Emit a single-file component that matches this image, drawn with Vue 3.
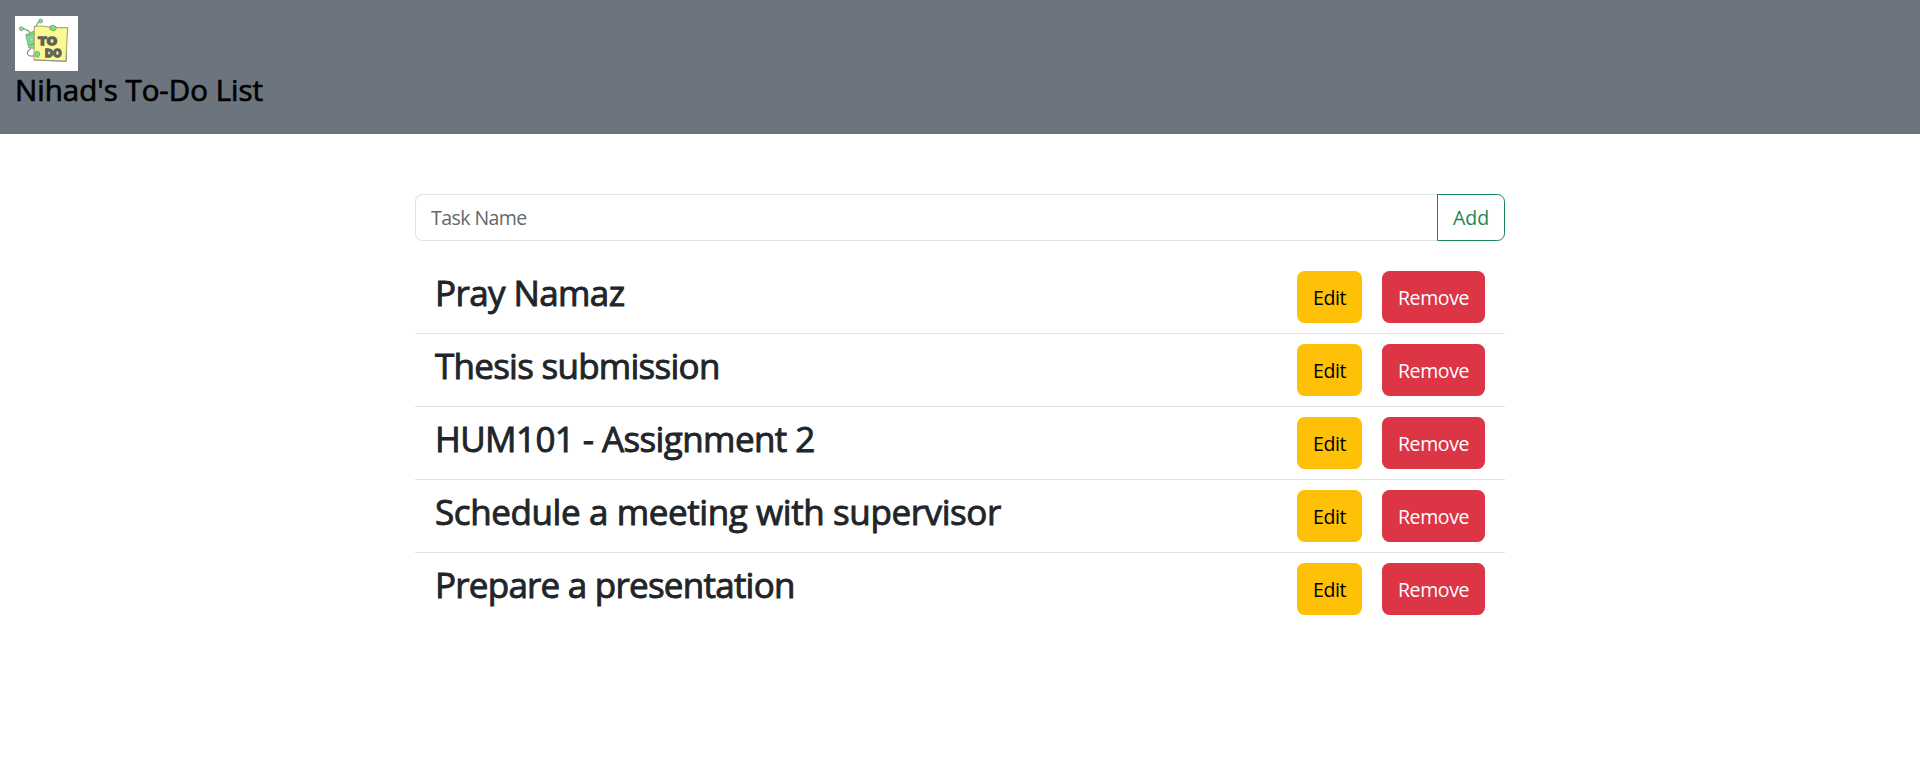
<script setup>
import { ref } from 'vue'

const draft = ref('')
const editing = ref(-1)
const tasks = ref([
  'Pray Namaz',
  'Thesis submission',
  'HUM101 - Assignment 2',
  'Schedule a meeting with supervisor',
  'Prepare a presentation',
])

function saveTask() {
  const name = draft.value.trim()
  if (!name) return
  if (editing.value >= 0) tasks.value[editing.value] = name
  else tasks.value.push(name)
  draft.value = ''
  editing.value = -1
}

function editTask(index) {
  draft.value = tasks.value[index]
  editing.value = index
}

function removeTask(index) {
  tasks.value.splice(index, 1)
  editing.value = -1
}
</script>

<template>
  <header class="banner">
    <svg class="logo" viewBox="0 0 189 165" aria-hidden="true">
      <rect width="189" height="165" fill="#fff" />
      <g fill="none" stroke="#8b8f8d" stroke-width="3.5" stroke-linecap="round">
        <path d="M20 38 Q36 39 45 49" />
        <path d="M75 17 Q67 19 64 31" />
        <path d="M47 98 Q34 106 38 115 Q43 123 61 119" />
      </g>
      <g fill="#7ee08e" stroke="#699174" stroke-width="2">
        <circle cx="19" cy="38" r="6" />
        <circle cx="77" cy="15" r="6" />
        <path d="M32 56 L57 45 L61 98 L41 95 Z" />
      </g>
      <path d="M37 60 L55 53" stroke="#5fb873" stroke-width="3" />
      <circle cx="50" cy="71" r="5" fill="#c8ebcc" stroke="#6f9c79" stroke-width="2" />
      <path d="M43 83 Q49 92 57 82" fill="none" stroke="#59915f" stroke-width="3" />
      <path d="M58 31 Q84 28 112 35 L158 35 Q155 84 153 136 L57 132 Z" fill="#fbf994" stroke="#aaa777" stroke-width="3.5" stroke-linejoin="round" />
      <path d="M59 132 Q106 133 153 136 L155 111" fill="none" stroke="#96957e" stroke-width="3" />
      <g fill="#77e27e" stroke="#67985f" stroke-width="2">
        <ellipse cx="114" cy="36" rx="10" ry="8" transform="rotate(15 114 36)" />
        <ellipse cx="67" cy="115" rx="7" ry="9" />
      </g>
      <g class="logo-text">
        <text x="70" y="88" textLength="56" lengthAdjust="spacingAndGlyphs">TO</text>
        <text x="89" y="124" textLength="51" lengthAdjust="spacingAndGlyphs">DO</text>
      </g>
    </svg>
    <h1 class="title">Nihad's To-Do List</h1>
  </header>
  <main class="content">
    <form class="entry" @submit.prevent="saveTask">
      <input v-model="draft" class="field" type="text" placeholder="Task Name" aria-label="Task Name" />
      <button class="add" type="submit">Add</button>
    </form>
    <ul class="tasks">
      <li v-for="(task, index) in tasks" :key="index" class="task">
        <h2 class="name">{{ task }}</h2>
        <button class="btn edit" type="button" @click="editTask(index)">Edit</button>
        <button class="btn remove" type="button" @click="removeTask(index)">Remove</button>
      </li>
    </ul>
  </main>
</template>

<style>
body {
  margin: 0;
  background: #fff;
}
</style>

<style scoped>
.banner,
.content,
.field,
.add,
.btn {
  font-family: "Segoe UI", "Open Sans", "Noto Sans", sans-serif;
}
.banner {
  box-sizing: border-box;
  height: 134px;
  padding: 16px 15px 0;
  background: #6c757d;
}
.logo {
  display: block;
  width: 63px;
  height: 55px;
}
.logo-text {
  font: 900 33px "DejaVu Sans", sans-serif;
  fill: #626154;
  stroke: #626154;
  stroke-width: 4px;
}
.title {
  margin: 0;
  color: #000;
  font-size: 29.5px;
  font-weight: 500;
  line-height: 38px;
  white-space: nowrap;
  -webkit-text-stroke: 0.7px currentColor;
}
.content {
  width: 1090px;
  margin: 60px auto 0;
}
.entry {
  display: flex;
  height: 47px;
}
.field,
.add {
  box-sizing: border-box;
  height: 47px;
  padding: 0 15px;
  background: #fff;
  font-size: 19.5px;
  outline: none;
}
.field {
  flex: 1;
  min-width: 0;
  border: 1px solid #dee2e6;
  border-right: 0;
  border-radius: 7.5px 0 0 7.5px;
  color: #212529;
  letter-spacing: -0.55px;
}
.field::placeholder {
  color: #63686d;
  opacity: 1;
}
.add {
  width: 68px;
  border: 1px solid #198754;
  border-radius: 0 7.5px 7.5px 0;
  color: #198754;
}
.tasks {
  margin: 20px 0 0;
  padding: 0;
  list-style: none;
}
.task {
  display: flex;
  align-items: center;
  box-sizing: border-box;
  height: 73px;
  padding: 0 20px;
  border-bottom: 1px solid #dee2e6;
}
.task:last-child {
  border-bottom-color: transparent;
}
.name {
  flex: 1;
  margin: 0 0 8px;
  color: #212529;
  font-size: 35px;
  font-weight: 500;
  line-height: 44px;
  letter-spacing: -0.6px;
  white-space: nowrap;
  -webkit-text-stroke: 0.9px currentColor;
}
.task:nth-child(2) .name {
  letter-spacing: -0.74px;
}
.task:nth-child(4) .name {
  letter-spacing: -0.4px;
}
.task:nth-child(5) .name {
  letter-spacing: -0.76px;
}
.btn {
  height: 52px;
  padding: 1px 0 0;
  border: 0;
  border-radius: 7.5px;
  font-size: 19.5px;
  letter-spacing: -0.4px;
}
.edit {
  width: 65px;
  background: #ffc107;
  color: #000;
}
.remove {
  width: 103px;
  margin-left: 20px;
  background: #dc3545;
  color: #fff;
}
</style>
